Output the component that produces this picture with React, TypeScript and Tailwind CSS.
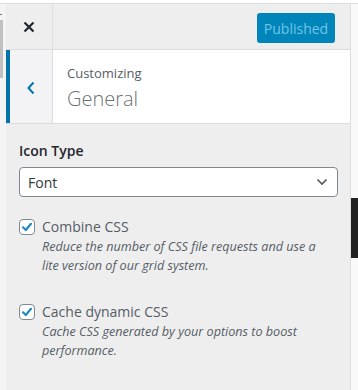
import React from "react";

function Check() {
  return (
    <div className="w-4 h-4 rounded-[4px] border border-[#7e8993] bg-white flex items-center justify-center shrink-0">
      <svg width="12" height="12" viewBox="0 0 12 12">
        <path d="M2 6.3 L4.8 9 L10 2.8" fill="none" stroke="#1e8cbe" strokeWidth="2.2" strokeLinecap="round" strokeLinejoin="round" />
      </svg>
    </div>
  );
}

export default function App() {
  const font = { fontFamily: '"Open Sans", "Noto Sans", sans-serif' };
  return (
    <div className="w-[358px] h-[390px] bg-white overflow-hidden flex flex-col" style={font}>
      <div className="h-[3px] bg-white" />
      <div className="flex flex-1 border-t border-[#dddddd]">
        {/* left strip with scrollbar */}
        <div className="w-[6px] bg-[#f4f4f4] relative">
          <div className="absolute left-0 top-[16px] w-[3px] h-[58px] bg-[#c1c1c1]" />
          <div className="absolute left-0 top-[10px] w-[2px] h-[1px] bg-[#777]" />
        </div>
        {/* main panel */}
        <div className="w-[345px] flex flex-col bg-[#eeeeee] border-r border-[#dddddd]">
          {/* header */}
          <div className="h-[46px] flex border-b border-[#dddddd]">
            <div className="w-[47px] border-r border-[#dddddd] flex items-center justify-center">
              <svg width="12" height="12" viewBox="0 0 12 12">
                <path d="M1.5 1.5 L10.5 10.5 M10.5 1.5 L1.5 10.5" stroke="#23282d" strokeWidth="2.2" />
              </svg>
            </div>
            <div className="flex-1 flex justify-end items-start pt-[9px] pr-[15px]">
              <div className="w-[78px] h-[30px] rounded-[3px] bg-[#0085ba] text-[#72c6e6] text-[14px] flex items-center justify-center">
                Published
              </div>
            </div>
          </div>
          {/* section header */}
          <div className="h-[74px] flex border-b border-[#dddddd]">
            <div className="w-[47px] bg-[#f3f3f5] border-l-4 border-[#0073aa] border-r border-r-[#dddddd] flex items-center justify-center">
              <svg width="10" height="14" viewBox="0 0 10 14" className="mt-[2px]">
                <path d="M7.5 1.5 L2.5 7 L7.5 12.5" fill="none" stroke="#0073aa" strokeWidth="2" />
              </svg>
            </div>
            <div className="flex-1 bg-white pl-[14px] pt-[14px]">
              <div className="text-[13px] leading-[18px] text-[#555d66]">Customizing</div>
              <div className="text-[20px] leading-[28px] text-[#6b7177] font-light mt-[3px]">General</div>
            </div>
          </div>
          {/* content */}
          <div className="pl-[13px] pr-[12px] pt-[17px]">
            <div className="text-[14px] font-semibold text-[#23282d] leading-[20px]">Icon Type</div>
            <div className="mt-[6px] h-[30px] rounded-[4px] border border-[#7e8993] bg-white flex items-center justify-between pl-[8px] pr-[9px]">
              <span className="text-[14px] text-[#32373c]">Font</span>
              <svg width="12" height="8" viewBox="0 0 12 8">
                <path d="M1.5 1.5 L6 6 L10.5 1.5" fill="none" stroke="#555" strokeWidth="1.6" />
              </svg>
            </div>
            <div className="mt-[21px] flex gap-[7px]">
              <div className="pt-[1px]"><Check /></div>
              <div className="w-[285px]">
                <div className="text-[14px] text-[#555d66] leading-[18px]">Combine CSS</div>
                <div className="text-[12.6px] italic text-[#555d66] leading-[19px] mt-[1px]">
                  Reduce the number of CSS file requests and use a lite version of our grid system.
                </div>
              </div>
            </div>
            <div className="mt-[28px] flex gap-[7px]">
              <div className="pt-[1px]"><Check /></div>
              <div className="w-[285px]">
                <div className="text-[14px] text-[#555d66] leading-[18px]">Cache dynamic CSS</div>
                <div className="text-[12.6px] italic text-[#555d66] leading-[19px] mt-[1px]">
                  Cache CSS generated by your options to boost performance.
                </div>
              </div>
            </div>
          </div>
        </div>
        {/* right strip */}
        <div className="flex-1 bg-[#f9f9f9] pt-[194px]">
          <div className="h-[60px] bg-[#222222]" />
        </div>
      </div>
    </div>
  );
}
